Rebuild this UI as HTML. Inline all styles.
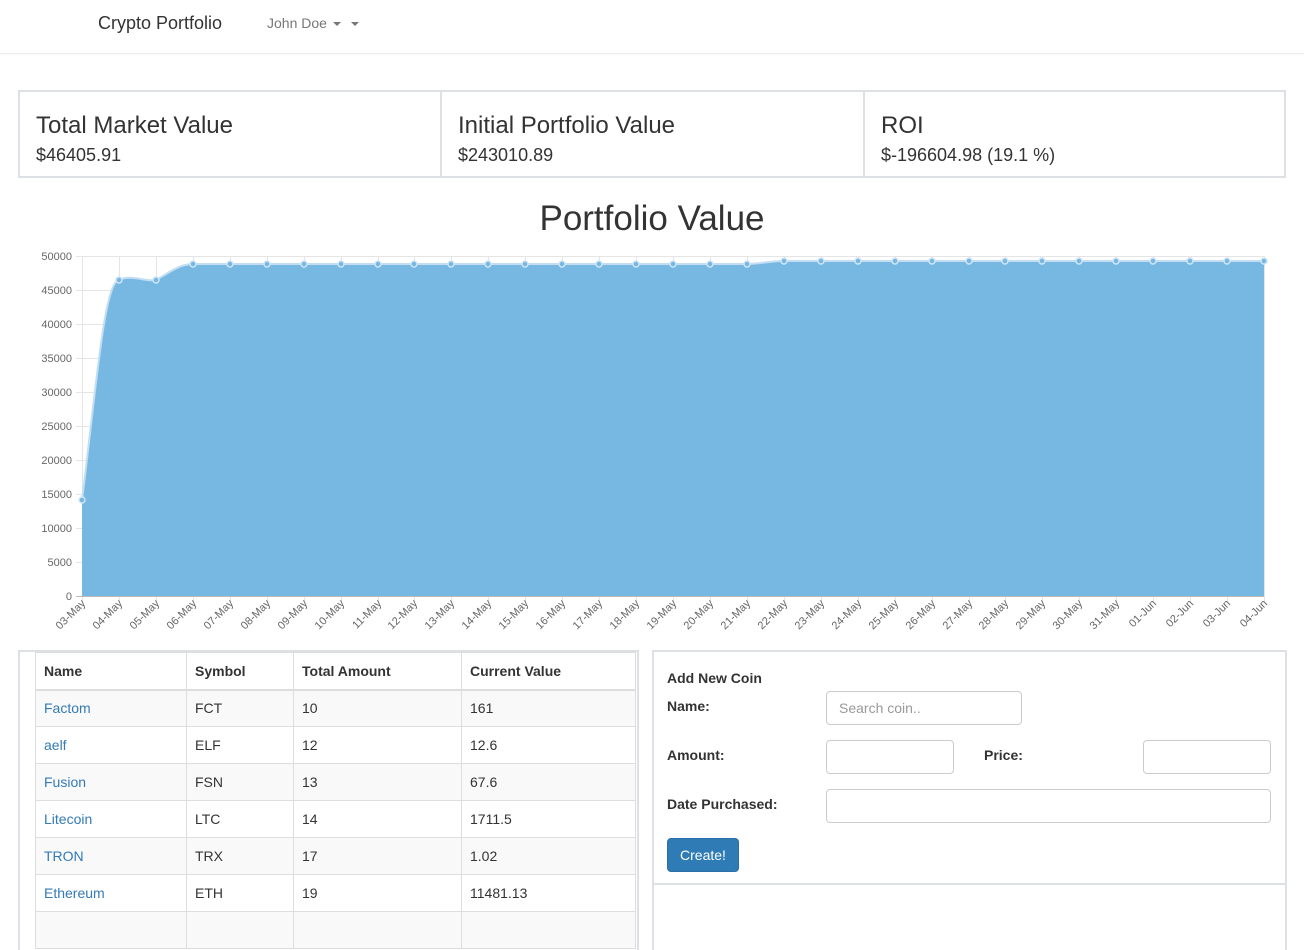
<!DOCTYPE html>
<html><head><meta charset="utf-8"><style>
*{box-sizing:border-box;margin:0;padding:0}
body{width:1304px;height:923px;overflow:hidden;background:#fff;font-family:"Liberation Sans",Arial,sans-serif;color:#333;position:relative}
.abs{position:absolute}
.nav{left:0;top:0;width:1304px;height:54px;border-bottom:1px solid #eee;box-shadow:0 1px 2px rgba(0,0,0,.03)}
.card{top:90px;height:88px;border:2px solid #dde1e6;padding:0 0 0 16px}
.card h3{font-size:24px;font-weight:normal;margin-top:20px;line-height:28px}
.card p{font-size:18px;margin-top:5px}
table{border-collapse:collapse;font-size:14px}
td,th{border:1px solid #ddd;height:37px;padding:0 8px;text-align:left}
th{border-bottom:2px solid #ddd}
tbody tr:nth-child(odd){background:#f9f9f9}
a{color:#337ab7;text-decoration:none}
.lbl{font-size:14px;font-weight:bold;color:#333}
.inp{border:1px solid #ccc;border-radius:4px;height:34px;background:#fff;font-size:14px;color:#999;padding:8px 12px}
.car{display:inline-block;width:0;height:0;border-left:4px solid transparent;border-right:4px solid transparent;border-top:4px solid #777;vertical-align:middle;margin-left:2px}
</style></head><body>
<div class="abs nav">
 <div class="abs" style="left:98px;top:13px;font-size:18px;color:#333">Crypto Portfolio</div>
 <div class="abs" style="left:267px;top:15px;font-size:14px;color:#777">John Doe <span class="car"></span> &nbsp;<span class="car"></span></div>
</div>
<div class="abs card" style="left:18px;width:424px"><h3>Total Market Value</h3><p>$46405.91</p></div>
<div class="abs card" style="left:440px;width:425px"><h3>Initial Portfolio Value</h3><p>$243010.89</p></div>
<div class="abs card" style="left:863px;width:423px"><h3>ROI</h3><p>$-196604.98 (19.1 %)</p></div>
<div class="abs" style="left:0;width:1304px;top:199px;text-align:center;font-size:35px;color:#333">Portfolio Value</div>
<svg class="abs" style="left:0;top:240px" width="1304" height="400" viewBox="0 240 1304 400" font-family="Liberation Sans, Arial, sans-serif" font-size="11" fill="#666">
<g stroke="#e5e5e5" stroke-width="1">
<line x1="76" y1="256.5" x2="1264" y2="256.5"/><line x1="76" y1="290.5" x2="1264" y2="290.5"/><line x1="76" y1="324.5" x2="1264" y2="324.5"/><line x1="76" y1="358.5" x2="1264" y2="358.5"/><line x1="76" y1="392.5" x2="1264" y2="392.5"/><line x1="76" y1="426.5" x2="1264" y2="426.5"/><line x1="76" y1="460.5" x2="1264" y2="460.5"/><line x1="76" y1="494.5" x2="1264" y2="494.5"/><line x1="76" y1="528.5" x2="1264" y2="528.5"/><line x1="76" y1="562.5" x2="1264" y2="562.5"/>
<line x1="82.5" y1="256" x2="82.5" y2="602"/><line x1="119.5" y1="256" x2="119.5" y2="602"/><line x1="156.5" y1="256" x2="156.5" y2="602"/><line x1="193.5" y1="256" x2="193.5" y2="602"/><line x1="230.5" y1="256" x2="230.5" y2="602"/><line x1="267.5" y1="256" x2="267.5" y2="602"/><line x1="304.5" y1="256" x2="304.5" y2="602"/><line x1="341.5" y1="256" x2="341.5" y2="602"/><line x1="378.5" y1="256" x2="378.5" y2="602"/><line x1="414.5" y1="256" x2="414.5" y2="602"/><line x1="451.5" y1="256" x2="451.5" y2="602"/><line x1="488.5" y1="256" x2="488.5" y2="602"/><line x1="525.5" y1="256" x2="525.5" y2="602"/><line x1="562.5" y1="256" x2="562.5" y2="602"/><line x1="599.5" y1="256" x2="599.5" y2="602"/><line x1="636.5" y1="256" x2="636.5" y2="602"/><line x1="673.5" y1="256" x2="673.5" y2="602"/><line x1="710.5" y1="256" x2="710.5" y2="602"/><line x1="747.5" y1="256" x2="747.5" y2="602"/><line x1="784.5" y1="256" x2="784.5" y2="602"/><line x1="821.5" y1="256" x2="821.5" y2="602"/><line x1="858.5" y1="256" x2="858.5" y2="602"/><line x1="895.5" y1="256" x2="895.5" y2="602"/><line x1="932.5" y1="256" x2="932.5" y2="602"/><line x1="969.5" y1="256" x2="969.5" y2="602"/><line x1="1005.5" y1="256" x2="1005.5" y2="602"/><line x1="1042.5" y1="256" x2="1042.5" y2="602"/><line x1="1079.5" y1="256" x2="1079.5" y2="602"/><line x1="1116.5" y1="256" x2="1116.5" y2="602"/><line x1="1153.5" y1="256" x2="1153.5" y2="602"/><line x1="1190.5" y1="256" x2="1190.5" y2="602"/><line x1="1227.5" y1="256" x2="1227.5" y2="602"/><line x1="1264.5" y1="256" x2="1264.5" y2="602"/>
</g>
<g text-anchor="end">
<text x="72" y="260">50000</text><text x="72" y="294">45000</text><text x="72" y="328">40000</text><text x="72" y="362">35000</text><text x="72" y="396">30000</text><text x="72" y="430">25000</text><text x="72" y="464">20000</text><text x="72" y="498">15000</text><text x="72" y="532">10000</text><text x="72" y="566">5000</text><text x="72" y="600">0</text>
</g>
<path d="M82,596 L82,500 C96,390 104,282 119,280 C132,274 145,282 156,280 C170,272 180,264 193,264 L747,264 C760,264 770,261 784,261 L1264,261 L1264,596 Z" fill="#77b8e2"/>
<path d="M82,500 C96,390 104,282 119,280 C132,274 145,282 156,280 C170,272 180,264 193,264 L747,264 C760,264 770,261 784,261 L1264,261" fill="none" stroke="#c3def2" stroke-width="2"/>
<line x1="76" y1="596.5" x2="1264" y2="596.5" stroke="#bbb"/>
<g fill="#77b8e2" stroke="#cfe6f6" stroke-width="1.5">
<circle cx="82" cy="500" r="3"/><circle cx="119" cy="280" r="3"/><circle cx="156" cy="280" r="3"/><circle cx="193" cy="264" r="3"/><circle cx="230" cy="264" r="3"/><circle cx="267" cy="264" r="3"/><circle cx="304" cy="264" r="3"/><circle cx="341" cy="264" r="3"/><circle cx="378" cy="264" r="3"/><circle cx="414" cy="264" r="3"/><circle cx="451" cy="264" r="3"/><circle cx="488" cy="264" r="3"/><circle cx="525" cy="264" r="3"/><circle cx="562" cy="264" r="3"/><circle cx="599" cy="264" r="3"/><circle cx="636" cy="264" r="3"/><circle cx="673" cy="264" r="3"/><circle cx="710" cy="264" r="3"/><circle cx="747" cy="264" r="3"/><circle cx="784" cy="261" r="3"/><circle cx="821" cy="261" r="3"/><circle cx="858" cy="261" r="3"/><circle cx="895" cy="261" r="3"/><circle cx="932" cy="261" r="3"/><circle cx="969" cy="261" r="3"/><circle cx="1005" cy="261" r="3"/><circle cx="1042" cy="261" r="3"/><circle cx="1079" cy="261" r="3"/><circle cx="1116" cy="261" r="3"/><circle cx="1153" cy="261" r="3"/><circle cx="1190" cy="261" r="3"/><circle cx="1227" cy="261" r="3"/><circle cx="1264" cy="261" r="3"/>
</g>
<g text-anchor="end">
<text transform="translate(86,604) rotate(-45)">03-May</text><text transform="translate(123,604) rotate(-45)">04-May</text><text transform="translate(160,604) rotate(-45)">05-May</text><text transform="translate(197,604) rotate(-45)">06-May</text><text transform="translate(234,604) rotate(-45)">07-May</text><text transform="translate(271,604) rotate(-45)">08-May</text><text transform="translate(308,604) rotate(-45)">09-May</text><text transform="translate(345,604) rotate(-45)">10-May</text><text transform="translate(382,604) rotate(-45)">11-May</text><text transform="translate(418,604) rotate(-45)">12-May</text><text transform="translate(455,604) rotate(-45)">13-May</text><text transform="translate(492,604) rotate(-45)">14-May</text><text transform="translate(529,604) rotate(-45)">15-May</text><text transform="translate(566,604) rotate(-45)">16-May</text><text transform="translate(603,604) rotate(-45)">17-May</text><text transform="translate(640,604) rotate(-45)">18-May</text><text transform="translate(677,604) rotate(-45)">19-May</text><text transform="translate(714,604) rotate(-45)">20-May</text><text transform="translate(751,604) rotate(-45)">21-May</text><text transform="translate(788,604) rotate(-45)">22-May</text><text transform="translate(825,604) rotate(-45)">23-May</text><text transform="translate(862,604) rotate(-45)">24-May</text><text transform="translate(899,604) rotate(-45)">25-May</text><text transform="translate(936,604) rotate(-45)">26-May</text><text transform="translate(973,604) rotate(-45)">27-May</text><text transform="translate(1009,604) rotate(-45)">28-May</text><text transform="translate(1046,604) rotate(-45)">29-May</text><text transform="translate(1083,604) rotate(-45)">30-May</text><text transform="translate(1120,604) rotate(-45)">31-May</text><text transform="translate(1157,604) rotate(-45)">01-Jun</text><text transform="translate(1194,604) rotate(-45)">02-Jun</text><text transform="translate(1231,604) rotate(-45)">03-Jun</text><text transform="translate(1268,604) rotate(-45)">04-Jun</text>
</g>
</svg>
<div class="abs" style="left:18px;top:650px;width:621px;height:300px;border:2px solid #dde1e6;border-bottom:none"></div>
<table class="abs" style="left:35px;top:652px;width:601px">
<thead><tr><th style="width:151px">Name</th><th style="width:107px">Symbol</th><th style="width:168px">Total Amount</th><th>Current Value</th></tr></thead>
<tbody>
<tr><td><a>Factom</a></td><td>FCT</td><td>10</td><td>161</td></tr>
<tr><td><a>aelf</a></td><td>ELF</td><td>12</td><td>12.6</td></tr>
<tr><td><a>Fusion</a></td><td>FSN</td><td>13</td><td>67.6</td></tr>
<tr><td><a>Litecoin</a></td><td>LTC</td><td>14</td><td>1711.5</td></tr>
<tr><td><a>TRON</a></td><td>TRX</td><td>17</td><td>1.02</td></tr>
<tr><td><a>Ethereum</a></td><td>ETH</td><td>19</td><td>11481.13</td></tr>
<tr><td>&nbsp;</td><td></td><td></td><td></td></tr>
</tbody></table>
<div class="abs" style="left:652px;top:650px;width:635px;height:300px;border:2px solid #dde1e6;border-bottom:none"></div>
<div class="abs" style="left:654px;top:652px;width:631px;height:233px;border-bottom:2px solid #dde1e6"></div>
<div class="abs lbl" style="left:667px;top:670px">Add New Coin</div>
<div class="abs lbl" style="left:667px;top:698px">Name:</div>
<div class="abs inp" style="left:826px;top:691px;width:196px">Search coin..</div>
<div class="abs lbl" style="left:667px;top:747px">Amount:</div>
<div class="abs inp" style="left:826px;top:740px;width:128px"></div>
<div class="abs lbl" style="left:984px;top:747px">Price:</div>
<div class="abs inp" style="left:1143px;top:740px;width:128px"></div>
<div class="abs lbl" style="left:667px;top:796px">Date Purchased:</div>
<div class="abs inp" style="left:826px;top:789px;width:445px"></div>
<div class="abs" style="left:667px;top:838px;width:72px;height:34px;background:#2e7bb6;border:1px solid #2a6fa6;border-radius:4px;color:#fff;font-size:14px;text-align:center;line-height:32px">Create!</div>
</body></html>
